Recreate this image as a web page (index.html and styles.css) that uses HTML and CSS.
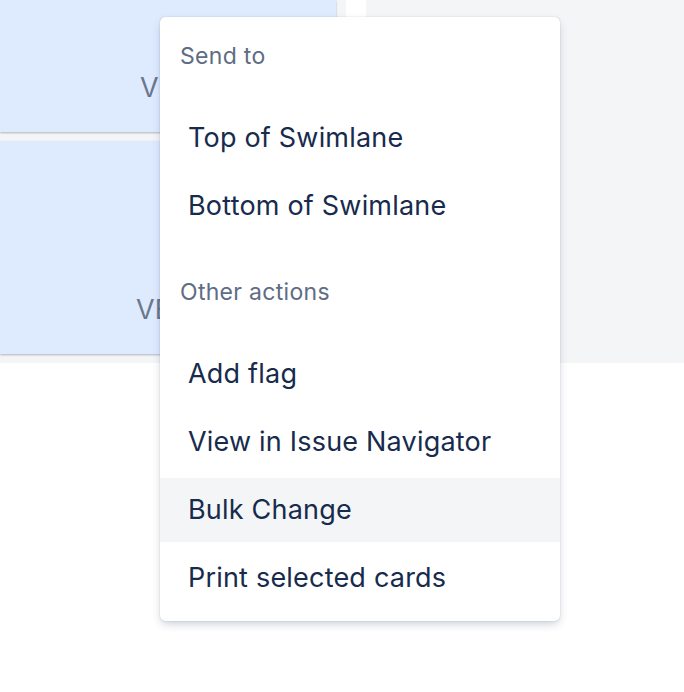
FILE: index.html
```html
<!DOCTYPE html>
<html lang="en">
<head>
<meta charset="utf-8">
<title>Card actions</title>
<link rel="stylesheet" href="styles.css">
</head>
<body>
<div class="board">
  <div class="column column-cards">
    <div class="card card-short"><span class="card-key card-key-a">V2</span></div>
    <div class="card card-tall"><span class="card-key card-key-b">VER</span></div>
  </div>
  <div class="column column-empty"></div>
</div>

<div class="menu" role="menu">
  <div class="group">
    <div class="group-heading">Send to</div>
    <div class="items">
      <div class="item">Top of Swimlane</div>
      <div class="item">Bottom of Swimlane</div>
    </div>
  </div>
  <div class="group group-next">
    <div class="group-heading">Other actions</div>
    <div class="items">
      <div class="item">Add flag</div>
      <div class="item">View in Issue Navigator</div>
      <div class="item item-hover">Bulk Change</div>
      <div class="item">Print selected cards</div>
    </div>
  </div>
</div>
</body>
</html>
```

FILE: styles.css
```css
html, body {
  margin: 0;
  padding: 0;
  background: #ffffff;
  font-family: Inter, "Noto Sans", "Liberation Sans", sans-serif;
  width: 684px;
  height: 692px;
  overflow: hidden;
  position: relative;
}

.board {
  display: flex;
  gap: 20px;
}

.column {
  background: #f4f5f7;
  height: 363px;
}

.column-cards {
  width: 346px;
  display: flex;
  flex-direction: column;
  gap: 9px;
}

.column-empty {
  flex: 1;
}

.card {
  width: 336px;
  background: #deebff;
  box-shadow: 0 1px 2px rgba(9, 30, 66, 0.3);
  display: flex;
  align-items: flex-end;
  box-sizing: border-box;
  padding-bottom: 28px;
}

.card-short { height: 132px; }
.card-tall { height: 213px; }

.card-key {
  font-size: 27px;
  line-height: 32px;
  color: #6b778c;
  white-space: nowrap;
}

.card-key-a { padding-left: 140px; }
.card-key-b { padding-left: 136px; }

.menu {
  position: absolute;
  left: 160px;
  top: 17px;
  width: 400px;
  box-sizing: border-box;
  padding: 27px 0 11px;
  background: #ffffff;
  border-radius: 5px;
  box-shadow: 0 4px 10px -2px rgba(9, 30, 66, 0.25), 0 0 1px rgba(9, 30, 66, 0.35);
}

.group-next {
  margin-top: 42px;
}

.group-heading {
  padding: 0 20px;
  font-size: 23px;
  line-height: 24px;
  letter-spacing: 0.3px;
  color: #5e6c84;
  margin-bottom: 38px;
}

.items {
  display: flex;
  flex-direction: column;
  gap: 4px;
}

.item {
  height: 64px;
  line-height: 64px;
  padding: 0 28px;
  font-size: 27px;
  letter-spacing: 0.2px;
  color: #172b4d;
  white-space: nowrap;
}

.item-hover {
  background: #f4f5f7;
}
```
